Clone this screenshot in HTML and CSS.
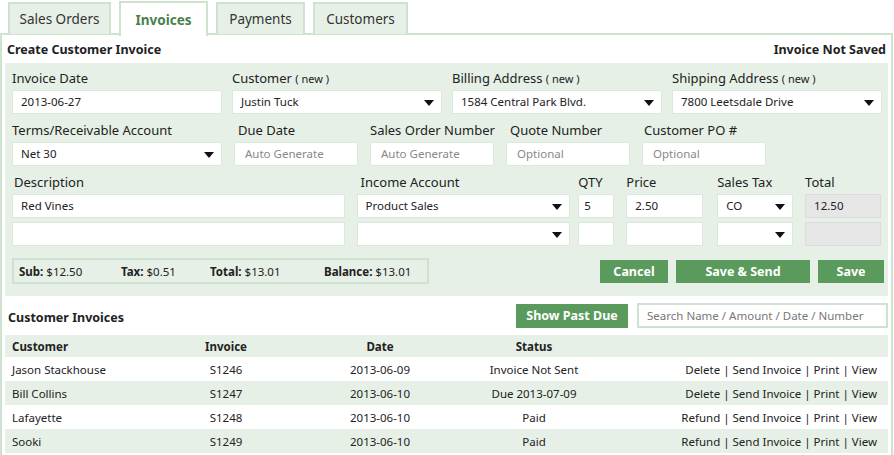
FILE: index.html
```html
<!DOCTYPE html>
<html>
<head>
<meta charset="utf-8">
<link rel="stylesheet" href="styles.css">
</head>
<body>
<div class="tabs">
  <div class="tab t1">Sales Orders</div>
  <div class="tab active t2">Invoices</div>
  <div class="tab t3">Payments</div>
  <div class="tab t4">Customers</div>
</div>
<div class="panel">
  <div class="panel-head">
    <span class="title">Create Customer Invoice</span>
    <span class="title">Invoice Not Saved</span>
  </div>
  <div class="form">
    <div class="row r1">
      <div class="field"><div class="lbl">Invoice Date</div><div class="inp">2013-06-27</div></div>
      <div class="field"><div class="lbl">Customer <small>( new )</small></div><div class="inp sel">Justin Tuck<i class="arrow"></i></div></div>
      <div class="field"><div class="lbl">Billing Address <small>( new )</small></div><div class="inp sel">1584 Central Park Blvd.<i class="arrow"></i></div></div>
      <div class="field"><div class="lbl">Shipping Address <small>( new )</small></div><div class="inp sel">7800 Leetsdale Drive<i class="arrow"></i></div></div>
    </div>
    <div class="row r2">
      <div class="field"><div class="lbl">Terms/Receivable Account</div><div class="inp sel">Net 30<i class="arrow"></i></div></div>
      <div class="field"><div class="lbl ind">Due Date</div><div class="inp ph">Auto Generate</div></div>
      <div class="field"><div class="lbl">Sales Order Number</div><div class="inp ph">Auto Generate</div></div>
      <div class="field"><div class="lbl ind">Quote Number</div><div class="inp ph">Optional</div></div>
      <div class="field"><div class="lbl ind2">Customer PO #</div><div class="inp ph">Optional</div></div>
    </div>
    <div class="r3">
      <div class="field f-desc"><div class="lbl ind2">Description</div><div class="inp">Red Vines</div><div class="inp"></div></div>
      <div class="field f-acct"><div class="lbl ind">Income Account</div><div class="inp sel">Product Sales<i class="arrow"></i></div><div class="inp sel"><i class="arrow"></i></div></div>
      <div class="field f-qty"><div class="lbl">QTY</div><div class="inp tight">5</div><div class="inp"></div></div>
      <div class="field f-price"><div class="lbl">Price</div><div class="inp">2.50</div><div class="inp"></div></div>
      <div class="field f-tax"><div class="lbl">Sales Tax</div><div class="inp sel">CO<i class="arrow"></i></div><div class="inp sel"><i class="arrow"></i></div></div>
      <div class="field f-total"><div class="lbl">Total</div><div class="inp dis">12.50</div><div class="inp dis"></div></div>
    </div>
    <div class="row r4">
      <div class="summary">
        <span class="s1"><b>Sub:</b> $12.50</span>
        <span class="s2"><b>Tax:</b> $0.51</span>
        <span class="s3"><b>Total:</b> $13.01</span>
        <span class="s4"><b>Balance:</b> $13.01</span>
      </div>
      <div class="buttons">
        <button class="btn b-cancel">Cancel</button>
        <button class="btn b-send">Save &amp; Send</button>
        <button class="btn b-save">Save</button>
      </div>
    </div>
  </div>
  <div class="list-head">
    <span class="title lt">Customer Invoices</span>
    <div class="list-tools">
      <button class="btn b-past">Show Past Due</button>
      <div class="search">Search Name / Amount / Date / Number</div>
    </div>
  </div>
  <table class="invoices">
    <colgroup><col class="c1"><col class="c2"><col class="c3"><col class="c4"><col class="c5"></colgroup>
    <thead>
      <tr><th class="left">Customer</th><th>Invoice</th><th>Date</th><th>Status</th><th></th></tr>
    </thead>
    <tbody>
      <tr><td class="left">Jason Stackhouse</td><td>S1246</td><td>2013-06-09</td><td>Invoice Not Sent</td><td class="acts">Delete | Send Invoice | Print | View</td></tr>
      <tr><td class="left">Bill Collins</td><td>S1247</td><td>2013-06-10</td><td>Due 2013-07-09</td><td class="acts">Delete | Send Invoice | Print | View</td></tr>
      <tr><td class="left">Lafayette</td><td>S1248</td><td>2013-06-10</td><td>Paid</td><td class="acts">Refund | Send Invoice | Print | View</td></tr>
      <tr><td class="left">Sooki</td><td>S1249</td><td>2013-06-10</td><td>Paid</td><td class="acts">Refund | Send Invoice | Print | View</td></tr>
    </tbody>
  </table>
</div>
</body>
</html>
```
FILE: styles.css
```css
* { box-sizing: border-box; }
html, body { margin: 0; padding: 0; background: #fff; }
body {
  font-family: "Noto Sans", "Open Sans", sans-serif;
  color: #222;
  width: 894px;
  height: 455px;
  overflow: hidden;
}
.tabs {
  display: flex;
  align-items: flex-end;
  height: 34px;
  padding-left: 8px;
  gap: 8px;
  position: relative;
  z-index: 2;
}
.tab {
  height: 32px;
  background: #e6f0e6;
  border: 2px solid #cfe2cf;
  border-bottom: none;
  display: flex;
  align-items: center;
  justify-content: center;
  font-size: 13.5px;
  color: #333;
}
.t1 { width: 103px; }
.t2 { width: 89px; }
.t3 { width: 89px; }
.t4 { width: 95px; }
.tab.active {
  height: 35px;
  margin-bottom: -2px;
  background: #fff;
  color: #4b804b;
  font-weight: bold;
}
.panel {
  border: 2px solid #cfe2cf;
  border-bottom: none;
  margin-top: -1px;
  margin-right: 1px;
  padding: 0 3px;
  height: 422px;
}
.panel-head {
  display: flex;
  justify-content: space-between;
  align-items: center;
  height: 28px;
  padding: 1px 2px 0 2px;
}
.title { font-weight: bold; font-size: 12.5px; }
.form {
  background: #e6f0e6;
  padding: 3px 7px 0 7px;
  height: 233px;
}
.row { display: grid; }
.r1 { grid-template-columns: repeat(4, 210px); column-gap: 10px; }
.r2 { grid-template-columns: 210px 124px 124px 124px 124px; column-gap: 12px; margin-top: 4px; }
.r3 { display: flex; margin-top: 4px; }
.f-desc { width: 333px; }
.f-acct { width: 214px; margin-left: 12px; }
.f-qty { width: 36px; margin-left: 8px; }
.f-price { width: 77px; margin-left: 12px; }
.f-tax { width: 76px; margin-left: 14px; }
.f-total { width: 76px; margin-left: 12px; }
.lbl {
  height: 24px;
  line-height: 24px;
  font-size: 13px;
  white-space: nowrap;
}
.lbl small { font-size: 11px; }
.lbl.ind { padding-left: 4px; }
.lbl.ind2 { padding-left: 2px; }
.inp {
  height: 24px;
  background: #fff;
  border: 1px solid #dde8dd;
  font-size: 11.5px;
  line-height: 22px;
  padding-left: 8px;
  position: relative;
  white-space: nowrap;
}
.r3 .inp + .inp { margin-top: 4px; }
.inp.ph { color: #888; padding-left: 10px; }
.inp.dis { background: #e6e6e6; border-color: #dcdcdc; }
.inp.tight { padding-left: 5px; }
.arrow {
  position: absolute;
  right: 7px;
  top: 9px;
  width: 0;
  height: 0;
  border-left: 5px solid transparent;
  border-right: 5px solid transparent;
  border-top: 6px solid #111;
}
.r4 {
  display: flex;
  justify-content: space-between;
  align-items: center;
  margin-top: 12px;
  margin-right: -3px;
}
.summary {
  width: 417px;
  height: 26px;
  border: 2px solid #cfe2cf;
  display: flex;
  align-items: center;
  font-size: 11.5px;
  position: relative;
  padding-left: 5px;
}
.summary span { display: inline-block; }
.s1 { width: 102px; }
.s2 { width: 89px; }
.s3 { width: 114px; }
.buttons { display: flex; gap: 8px; }
.btn {
  height: 23px;
  border: none;
  background: #5a9a5c;
  color: #fff;
  font-family: inherit;
  font-weight: bold;
  font-size: 12.5px;
  padding: 0;
  border-radius: 0;
}
.b-cancel { width: 68px; }
.b-send { width: 134px; }
.b-save { width: 66px; }
.list-head {
  display: flex;
  justify-content: space-between;
  align-items: center;
  height: 39px;
  padding-left: 3px;
}
.lt { padding-top: 4px; }
.list-tools { display: flex; align-items: center; gap: 9px; }
.b-past { width: 112px; height: 24px; }
.search {
  width: 251px;
  height: 25px;
  border: 2px solid #cfe2cf;
  font-size: 11.5px;
  color: #777;
  line-height: 21px;
  padding-left: 8px;
}
.invoices {
  width: 883px;
  border-collapse: collapse;
  font-size: 11.5px;
  table-layout: fixed;
}
.c1 { width: 144px; }
.c2 { width: 154px; }
.c3 { width: 154px; }
.c4 { width: 154px; }
.invoices th {
  background: #e6f0e6;
  height: 22px;
  font-weight: bold;
  text-align: center;
  padding: 0;
}
.invoices td {
  height: 24px;
  text-align: center;
  padding: 0;
  white-space: nowrap;
}
.invoices tbody tr:nth-child(even) td { background: #e6f0e6; }
.invoices .left { text-align: left; padding-left: 7px; }
.invoices .acts { text-align: right; padding-right: 11px; }
```
